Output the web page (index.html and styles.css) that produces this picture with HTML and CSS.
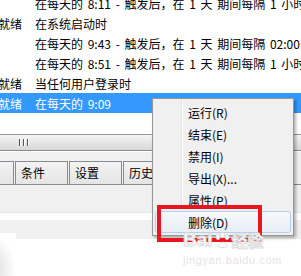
FILE: index.html
```html
<!DOCTYPE html>
<html lang="zh-CN">
<head>
    <meta charset="UTF-8">
    <title>任务计划程序</title>
    <link rel="stylesheet" href="styles.css">
</head>
<body>
<div class="window">
    <!-- task list -->
    <div class="list">
        <div class="row"><span class="c1"></span><span class="c2">在每天的 8:11 - 触发后，在 1 天 期间每隔 1 小时 的持续时间内</span></div>
        <div class="row"><span class="c1">就绪</span><span class="c2">在系统启动时</span></div>
        <div class="row"><span class="c1"></span><span class="c2">在每天的 9:43 - 触发后，在 1 天 期间每隔 02:00:00 的持续时间内</span></div>
        <div class="row"><span class="c1"></span><span class="c2">在每天的 8:51 - 触发后，在 1 天 期间每隔 1 小时 的持续时间内</span></div>
        <div class="row"><span class="c1">就绪</span><span class="c2">当任何用户登录时</span></div>
        <div class="row selected"><span class="c1">就绪</span><span class="c2">在每天的 9:09</span></div>
    </div>

    <div class="hscroll">
        <div class="grip"><i></i><i></i><i></i></div>
    </div>
    <div class="spacer"></div>

    <div class="tabs">
        <div class="tab first"></div>
        <div class="tab">条件</div>
        <div class="tab">设置</div>
        <div class="tab">历史记录</div>
        <div class="tab"></div>
    </div>
    <div class="panel"></div>
    <div class="strip"></div>
    <div class="band"></div>
    <div class="bottom"><div class="blur"></div></div>
</div>

<!-- context menu -->
<div class="menu">
    <div class="item">运行(R)</div>
    <div class="item">结束(E)</div>
    <div class="item">禁用(I)</div>
    <div class="item">导出(X)...</div>
    <div class="item">属性(P)</div>
    <div class="item hover">删除(D)</div>
</div>

<div class="mark"></div>

<div class="watermark">
    <div class="wm-top">
        <span class="bai">Bai</span>
        <svg class="paw" width="17" height="17" viewBox="0 0 17 17">
            <ellipse cx="4" cy="5" rx="2" ry="2.6" fill="#fff" stroke="#dcdcdc"/>
            <ellipse cx="8.5" cy="3" rx="2" ry="2.6" fill="#fff" stroke="#dcdcdc"/>
            <ellipse cx="13" cy="5" rx="2" ry="2.6" fill="#fff" stroke="#dcdcdc"/>
            <path d="M4 14 C4 9 13 9 13 14 C13 16 4 16 4 14Z" fill="#fff" stroke="#dcdcdc"/>
        </svg>
        <span class="jy">经验</span>
    </div>
    <div class="wm-url">jingyan.baidu.com</div>
</div>
</body>
</html>
```

FILE: styles.css
```css
body {
    margin: 0;
    width: 301px;
    height: 276px;
    overflow: hidden;
    background: #fff;
    font-family: "Noto Sans CJK SC", "Noto Sans", sans-serif;
    font-size: 12px;
    color: #000;
    position: relative;
}
.window {
    display: flex;
    flex-direction: column;
    width: 301px;
}
.list {
    height: 141px;
    margin-top: -7px;
}
.row {
    display: flex;
    align-items: center;
    height: 20px;
    white-space: nowrap;
    overflow: hidden;
    margin-left: -2px;
}
.c1 {
    width: 37px;
    flex-shrink: 0;
}
.c2 {
    word-spacing: 2px;
}
.selected {
    background: #3399ff;
    color: #fff;
}
.hscroll {
    height: 15px;
    border-top: 1px solid #979797;
    border-bottom: 1px solid #8a8a8a;
    background: linear-gradient(#f4f4f4, #e6e6e6 50%, #d8d8d8);
    position: relative;
}
.grip {
    position: absolute;
    left: 19px;
    top: 4px;
    display: flex;
    gap: 2px;
}
.grip i {
    width: 1px;
    height: 7px;
    background: #555;
    border-right: 1px solid #fff;
}
.spacer {
    height: 9px;
    background: #f0f0f0;
    border-top: 1px solid #fff;
}
.tabs {
    display: flex;
    height: 23px;
    background: #f0f0f0;
}
.tab {
    width: 46px;
    flex-shrink: 0;
    border: 1px solid #898c95;
    border-bottom: none;
    margin-right: 1px;
    background: linear-gradient(#f3f3f3, #e5e5e5);
    padding-left: 5px;
    line-height: 22px;
    white-space: nowrap;
    overflow: hidden;
}
.tab.first {
    width: 13px;
    margin-left: -1px;
    padding: 0;
}
.panel {
    height: 27px;
    border-top: 1px solid #898c95;
    background: #f0f0f0;
}
.strip {
    height: 7px;
    border-top: 1px solid #dde8f3;
    background: #fff;
}
.band {
    height: 19px;
    background: #f0f0f0;
}
.bottom {
    height: 40px;
    background: #fff;
    position: relative;
}
.blur {
    position: absolute;
    left: -10px;
    top: -6px;
    width: 26px;
    height: 46px;
    background: radial-gradient(ellipse at 0 80%, #d8d8dc, #fff 70%);
}
.menu {
    position: absolute;
    left: 152px;
    top: 98px;
    width: 136px;
    padding: 2px;
    border: 1px solid #979797;
    background: linear-gradient(90deg, #f0f0f0 28px, #e2e3e3 28px, #e2e3e3 29px, #fff 29px, #fff 30px, #f0f0f0 30px);
    box-shadow: 2px 2px 3px rgba(0, 0, 0, 0.3);
}
.item {
    height: 22px;
    line-height: 22px;
    padding-left: 32px;
    border: 1px solid transparent;
    box-sizing: border-box;
    border-radius: 3px;
}
.item.hover {
    border-color: #b7cfec;
    background: linear-gradient(#f5f8fc, #e8eef6);
}
.mark {
    position: absolute;
    left: 157px;
    top: 205px;
    width: 97px;
    height: 29px;
    border: 4px solid #e8161e;
}
.watermark {
    position: absolute;
    left: 183px;
    top: 228px;
    color: #fff;
    font-family: "Liberation Sans", Arial, sans-serif;
}
.wm-top {
    display: flex;
    align-items: center;
    gap: 1px;
}
.bai {
    font-size: 19px;
    font-weight: bold;
    -webkit-text-stroke: 1px #dcdcdc;
    color: #fff;
}
.jy {
    font-family: "Noto Sans CJK SC", sans-serif;
    font-size: 16px;
    font-weight: bold;
    -webkit-text-stroke: 1px #dcdcdc;
    color: #fff;
}
.wm-url {
    font-size: 11px;
    color: #e4e4e4;
    margin-top: 2px;
    letter-spacing: 0.6px;
}
```
